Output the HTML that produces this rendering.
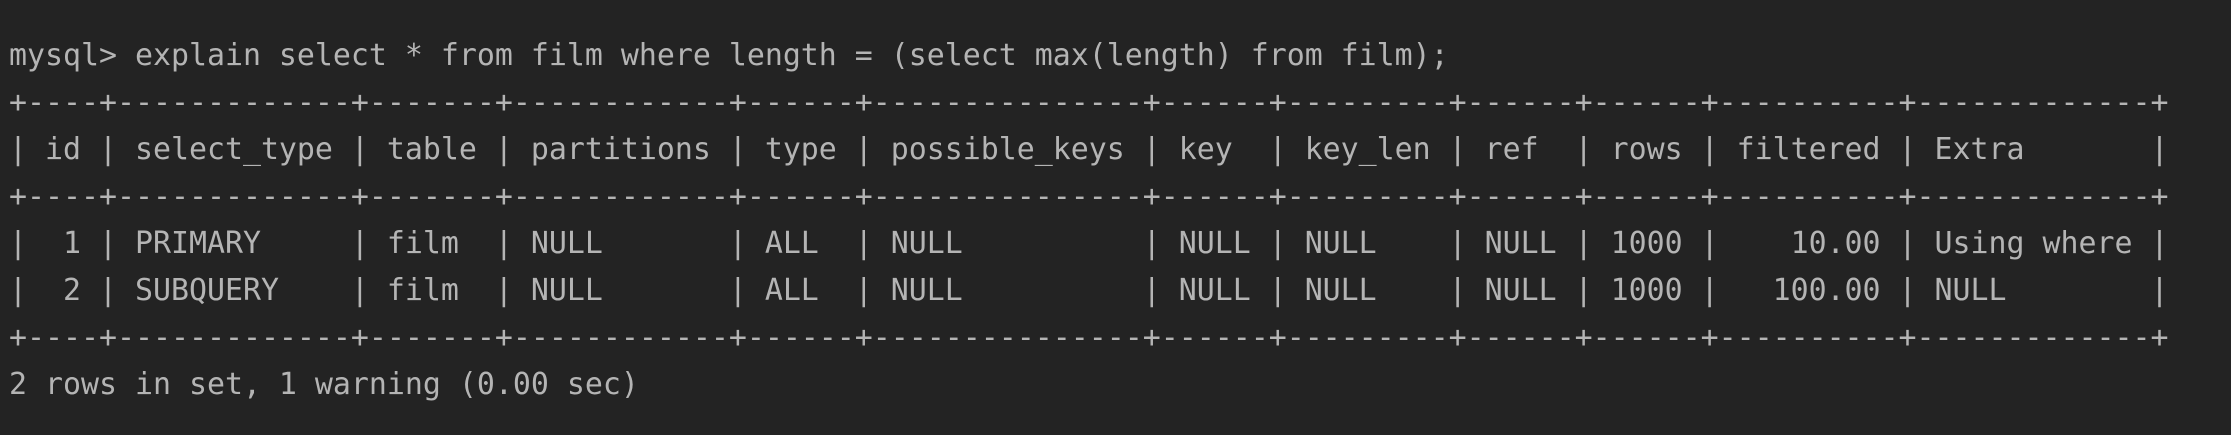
<!DOCTYPE html>
<html><head><meta charset="utf-8"><style>
html,body{margin:0;padding:0;background:#232323;width:2231px;height:435px;overflow:hidden}
pre{margin:0;position:absolute;left:9px;top:32px;font-family:"DejaVu Sans Mono","Liberation Mono",monospace;font-size:29.9px;line-height:47px;color:#b4b4b4}
</style></head><body><pre>mysql&gt; explain select * from film where length = (select max(length) from film);
+----+-------------+-------+------------+------+---------------+------+---------+------+------+----------+-------------+
| id | select_type | table | partitions | type | possible_keys | key  | key_len | ref  | rows | filtered | Extra       |
+----+-------------+-------+------------+------+---------------+------+---------+------+------+----------+-------------+
|  1 | PRIMARY     | film  | NULL       | ALL  | NULL          | NULL | NULL    | NULL | 1000 |    10.00 | Using where |
|  2 | SUBQUERY    | film  | NULL       | ALL  | NULL          | NULL | NULL    | NULL | 1000 |   100.00 | NULL        |
+----+-------------+-------+------------+------+---------------+------+---------+------+------+----------+-------------+
2 rows in set, 1 warning (0.00 sec)</pre></body></html>
